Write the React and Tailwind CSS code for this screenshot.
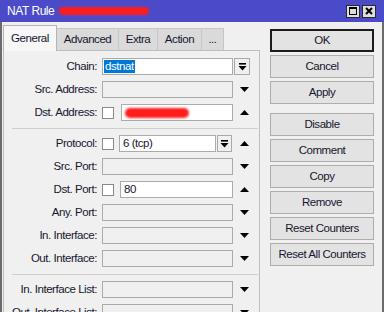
import React from 'react'

const ink = 'text-[#16162e]'

function Tri({ up }) {
  return (
    <svg width="9" height="5" viewBox="0 0 9 5" className="block">
      <polygon points={up ? '0,5 9,5 4.5,0' : '0,0 9,0 4.5,5'} fill="#000" />
    </svg>
  )
}

function DropBtn({ w = 'w-[16px]' }) {
  return (
    <div className={`ml-[1px] flex h-full ${w} shrink-0 items-center justify-center border border-[#a9a9a9] bg-[#f0f0f0]`}>
      <svg width="9" height="8" viewBox="0 0 9 8" className="block">
        <rect x="1" y="0" width="7" height="1.6" fill="#000" />
        <polygon points="0.5,3 8.5,3 4.5,7.5" fill="#000" />
      </svg>
    </div>
  )
}

function Box({ on = true, className = '', children }) {
  return (
    <div
      className={`flex h-full items-center border border-[#ababab] pl-[3px] ${on ? 'bg-white' : 'bg-[#f0f0f0]'} ${className}`}
    >
      {children}
    </div>
  )
}

function Check() {
  return <div className="h-[12px] w-[12px] shrink-0 border border-[#8a8a8a] bg-white" />
}

function Row({ label, children, trail }) {
  return (
    <div className="flex h-[17px] items-center">
      <div className={`w-[93px] shrink-0 text-right ${ink}`}>{label}</div>
      <div className="ml-[5px] flex h-full w-[131px] shrink-0 items-center">{children}</div>
      <div className="flex h-full flex-1 items-center">{trail}</div>
    </div>
  )
}

const Up = <span className="ml-[7px]"><Tri up /></span>
const Down = <span className="ml-[7px]"><Tri /></span>

function Sep() {
  return <div className="mb-[6px] ml-[8px] mr-[1px] mt-[7px] h-px bg-[#cfcfcf]" />
}

function Btn({ children, def, className = '' }) {
  return (
    <div
      className={`flex h-[23px] items-center justify-center ${ink} ${
        def ? 'border-2 border-[#1c1c1c]' : 'border border-[#adadad]'
      } bg-[#e3e3e3] ${className}`}
    >
      {children}
    </div>
  )
}

export default function App() {
  const tabs = [
    ['General', 'w-[54px]'],
    ['Advanced', 'w-[62px]'],
    ['Extra', 'w-[39px]'],
    ['Action', 'w-[44px]'],
    ['...', 'w-[22px]'],
  ]
  return (
    <div className="flex h-[312px] w-[384px] flex-col overflow-hidden bg-[#f0f0f0] font-['Liberation_Sans',Arial,sans-serif] text-[11.5px] leading-none tracking-[-0.45px]">
      {/* title bar */}
      <div className="flex h-[22px] shrink-0 items-center bg-[#4b4bc9] pl-[7px] pr-[8px]">
        <span className="text-[12px] text-white">NAT Rule</span>
        <div className="ml-[5px] h-[8px] w-[90px] rounded-full bg-[#ff1c1c] blur-[1px]" />
        <div className="ml-auto flex gap-[2px]">
          <div className="flex h-[13px] w-[14px] items-center justify-center border border-[#2a2a2a] bg-[#dedede]">
            <svg width="8" height="8" viewBox="0 0 8 8" className="block">
              <rect x="0.5" y="0.5" width="7" height="7" fill="none" stroke="#000" />
              <rect x="0" y="0" width="8" height="2" fill="#000" />
            </svg>
          </div>
          <div className="flex h-[13px] w-[14px] items-center justify-center border border-[#2a2a2a] bg-[#dedede]">
            <svg width="8" height="8" viewBox="0 0 8 8" className="block">
              <path d="M1 1 L7 7 M7 1 L1 7" stroke="#000" strokeWidth="2" />
            </svg>
          </div>
        </div>
      </div>

      {/* body */}
      <div className="flex min-h-0 flex-1 border-l-2 border-r-2 border-[#6b6b6b] pl-[1px]">
        <div className="flex w-[257px] shrink-0 flex-col">
          <div className="flex h-[28px] shrink-0 items-end">
            {tabs.map(([t, w], i) =>
              i === 0 ? (
                <div
                  key={t}
                  className={`${w} relative z-10 -mb-px flex h-[26px] items-center justify-center border-l border-r border-t border-[#b4b4b4] bg-[#f7f7f7] ${ink}`}
                >
                  {t}
                </div>
              ) : (
                <div
                  key={t}
                  className={`${w} flex h-[22px] items-center justify-center border-r border-t border-[#c6c6c6] bg-[#dadada] ${ink}`}
                >
                  {t}
                </div>
              )
            )}
          </div>
          <div className="flex-1 border border-[#bdbdbd] pt-[7px]">
            <div className="flex flex-col gap-[6px]">
              <Row label="Chain:" trail={<DropBtn />}>
                <Box className="w-full !pl-[1px]">
                  <span className="bg-[#0078d7] px-[1px] py-[1px] text-white">dstnat</span>
                </Box>
              </Row>
              <Row label="Src. Address:" trail={Down}>
                <Box on={false} className="w-full" />
              </Row>
              <Row label="Dst. Address:" trail={Up}>
                <Check />
                <Box className="ml-[7px] flex-1">
                  <div className="h-[10px] w-[64px] rounded-full bg-[#ff1c1c] blur-[1px]" />
                </Box>
              </Row>
            </div>
            <Sep />
            <div className="flex flex-col gap-[6px]">
              <Row label="Protocol:" trail={Up}>
                <Check />
                <Box className={`ml-[5px] w-[97px] ${ink}`}>6 (tcp)</Box>
                <DropBtn w="w-[15px]" />
              </Row>
              <Row label="Src. Port:" trail={Down}>
                <Box on={false} className="w-full" />
              </Row>
              <Row label="Dst. Port:" trail={Up}>
                <Check />
                <Box className={`ml-[6px] flex-1 ${ink}`}>80</Box>
              </Row>
              <Row label="Any. Port:" trail={Down}>
                <Box on={false} className="w-full" />
              </Row>
              <Row label="In. Interface:" trail={Down}>
                <Box on={false} className="w-full" />
              </Row>
              <Row label="Out. Interface:" trail={Down}>
                <Box on={false} className="w-full" />
              </Row>
            </div>
            <Sep />
            <div className="flex flex-col gap-[6px]">
              <Row label="In. Interface List:" trail={Down}>
                <Box on={false} className="w-full" />
              </Row>
              <Row label="Out. Interface List:" trail={Down}>
                <Box on={false} className="w-full" />
              </Row>
            </div>
          </div>
        </div>

        {/* buttons */}
        <div className="ml-[10px] flex w-[104px] shrink-0 flex-col gap-[3px] pt-[7px]">
          <Btn def>OK</Btn>
          <Btn>Cancel</Btn>
          <Btn>Apply</Btn>
          <Btn className="mt-[6px]">Disable</Btn>
          <Btn>Comment</Btn>
          <Btn>Copy</Btn>
          <Btn>Remove</Btn>
          <Btn>Reset Counters</Btn>
          <Btn>Reset All Counters</Btn>
        </div>
      </div>
    </div>
  )
}
